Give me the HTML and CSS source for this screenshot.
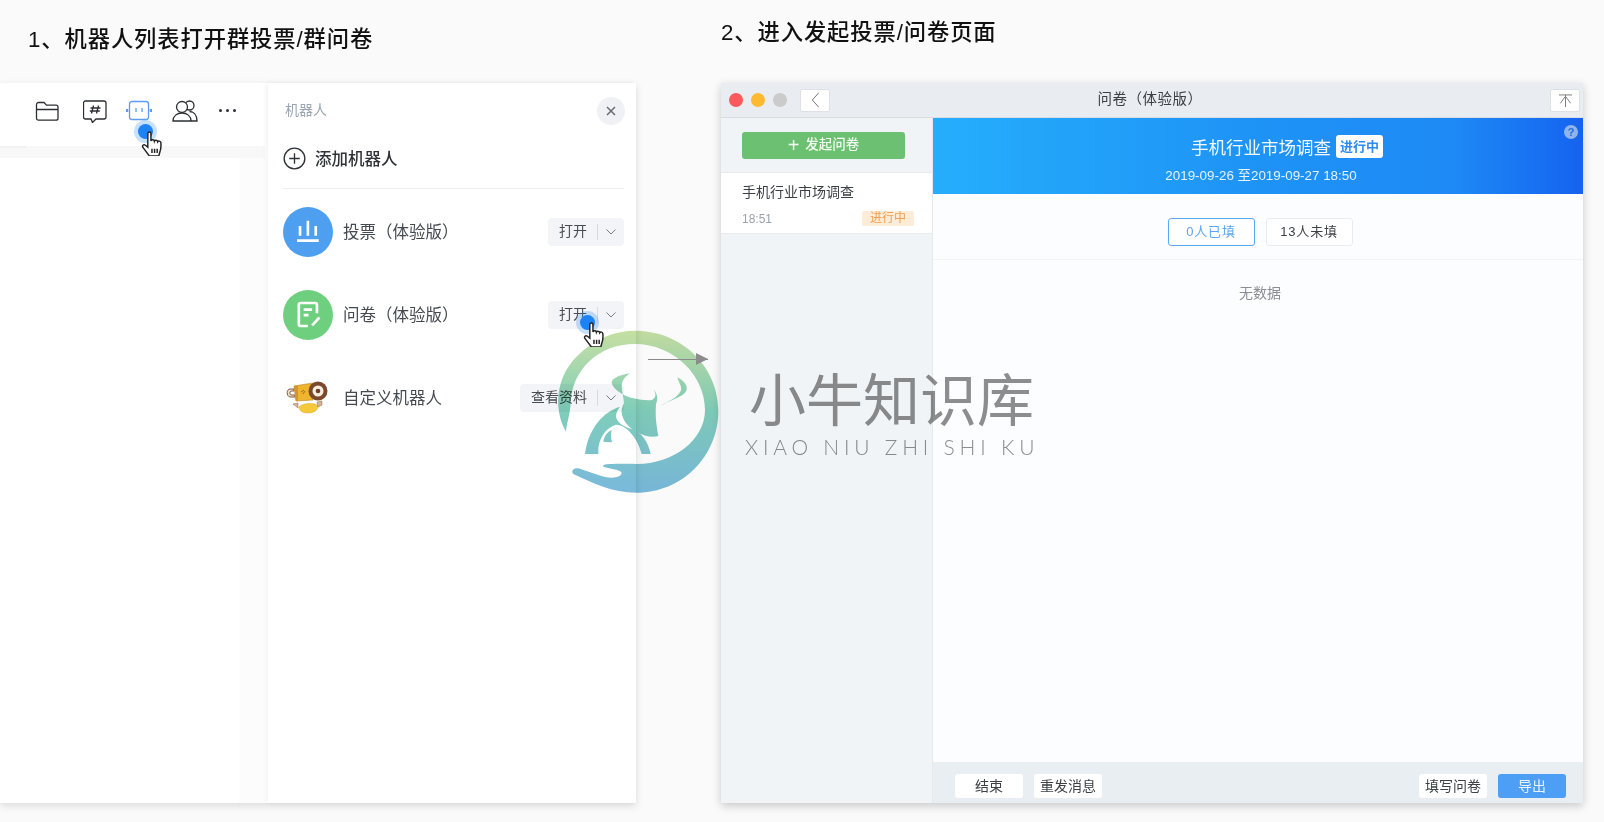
FILE: index.html
```html
<!DOCTYPE html>
<html lang="zh">
<head>
<meta charset="utf-8">
<title>投票问卷</title>
<link rel="stylesheet" href="styles.css">
</head>
<body>
<div class="page">
  <section class="col col-left">
    <h2 class="step step-left">1、机器人列表打开群投票/群问卷</h2>
    <div class="panel">
      <div class="chat">
        <div class="toolbar">
          <svg class="tool" viewBox="0 0 24 24"><path d="M1.500 5.500a2 2 0 0 1 2-2h5.500l2.500 2.700h9.500a2 2 0 0 1 2 2v11a2 2 0 0 1-2 2h-17.500a2 2 0 0 1-2-2zM1.500 10.500h21"/></svg>
          <svg class="tool tool-chat" viewBox="0 0 24 24"><path d="M3 2h18a2 2 0 0 1 2 2v14a2 2 0 0 1-2 2h-8l-3.500 3.500-1.500-3.500h-5.500a2 2 0 0 1-2-2v-14a2 2 0 0 1 2-2zM10.500 6.500l-2 8M15.500 6.500l-2 8M7.500 9h10M6.800 12h10"/></svg>
          <svg class="tool tool-blue" viewBox="0 0 26 24"><rect x="3.500" y="2.500" width="19" height="18" rx="2.500"/><path d="M10 9v4M16 9v4"/><path class="thick" d="M1 10v3M25 10v3"/></svg>
          <svg class="tool tool-wide" viewBox="0 0 26 24"><circle cx="17.500" cy="6.500" r="4.500"/><circle cx="10" cy="8" r="5.500" fill="#fff"/><path d="M1 22c0-5 4-8 9-8s9 3 9 8zM17.500 12.500c4 0 7.500 3 7.500 9.500h-6"/></svg>
          <span class="dots"><i></i><i></i><i></i></span>
        </div>
        <div class="strip"></div>
        <div class="chat-body"><div class="chat-sheet"></div></div>
      </div>
      <aside class="robots">
        <header class="robots-head">
          <span class="robots-title">机器人</span>
          <span class="close">
            <svg viewBox="0 0 10 10"><path d="M1 1l8 8M9 1l-8 8"/></svg>
          </span>
        </header>
        <div class="add">
          <svg class="add-icon" viewBox="0 0 24 24"><circle cx="12" cy="12" r="10.800"/><path d="M12 6.500v11M6.500 12h11"/></svg>
          <span>添加机器人</span>
        </div>
        <ul class="robot-list">
          <li class="robot">
            <span class="avatar avatar-blue">
              <svg viewBox="0 0 24 24"><path d="M5 7.500v8M11.500 3v12.500M18 7.500v8M2.500 19.500h18"/></svg>
            </span>
            <span class="robot-name">投票（体验版）</span>
            <span class="split"><b>打开</b><em></em><svg viewBox="0 0 10 6"><path d="M.5.500l4.500 4.500 4.500-4.500"/></svg></span>
          </li>
          <li class="robot">
            <span class="avatar avatar-green">
              <svg viewBox="0 0 24 24"><path d="M19 11v-7a1.500 1.500 0 0 0-1.500-1.500h-12a1.500 1.500 0 0 0-1.500 1.500v16a1.500 1.500 0 0 0 1.500 1.500h6M8 8h7M8 12.500h4M15 21l6-6.500"/></svg>
            </span>
            <span class="robot-name">问卷（体验版）</span>
            <span class="split"><b>打开</b><em></em><svg viewBox="0 0 10 6"><path d="M.5.500l4.500 4.500 4.500-4.500"/></svg></span>
          </li>
          <li class="robot">
            <svg class="avatar-art" viewBox="0 0 44 34">
              <path d="M8 8H4c-3.500 0-4 7 0 8h5v-2H5c-1.500 0-1.500-4 0-4h3z" fill="#efe2d2" stroke="#7a4a2c" stroke-width=".9"/>
              <path d="M8 5l19-3v17l-17 1z" fill="#efb52e" stroke="#b97f20" stroke-width=".6"/>
              <path d="M8 5l4-.6V19.800l-2 .2z" fill="#d4952a"/>
              <path d="M15 11l3-2M17 13l2-3" stroke="#8a5a20" stroke-width=".8" fill="none"/>
              <circle cx="32" cy="10" r="9.500" fill="#7a4a2c"/>
              <circle cx="32" cy="10" r="5.500" fill="#f6ecdf"/>
              <circle cx="32" cy="10" r="2.300" fill="#6e3f26"/>
              <path d="M13 26c3-4 16-5 19-1 0 4-4 7-9.500 7S13 30 13 26z" fill="#f4c93a" stroke="#d9a52a" stroke-width=".5"/>
              <path d="M12 22l-5 1 5 4zM31 21l5-1v4l-4 2z" fill="#d3b59a" stroke="#8a6a50" stroke-width=".5"/>
            </svg>
            <span class="robot-name">自定义机器人</span>
            <span class="split"><b>查看资料</b><em></em><svg viewBox="0 0 10 6"><path d="M.5.500l4.500 4.500 4.500-4.500"/></svg></span>
          </li>
        </ul>
      </aside>
    </div>
  </section>

  <section class="col col-right">
    <h2 class="step step-right">2、进入发起投票/问卷页面</h2>
    <div class="window">
      <div class="titlebar">
        <span class="lights"><i class="red"></i><i class="amber"></i><i class="grey"></i></span>
        <span class="bar-btn bar-back">
          <svg viewBox="0 0 10 18"><path d="M8.500 1l-7 8 7 8"/></svg>
        </span>
        <span class="win-title">问卷（体验版）</span>
        <span class="bar-btn bar-pin">
          <svg viewBox="0 0 16 14"><path d="M1 1h14M8 1v13M7.500 3l-5 7M8.500 3l5 7"/></svg>
        </span>
      </div>
      <div class="win-body">
        <nav class="side">
          <div class="side-top"><button class="new-btn"><span class="plus">+</span>发起问卷</button></div>
          <div class="item">
            <div class="item-title">手机行业市场调查</div>
            <div class="item-meta"><span class="item-time">18:51</span><span class="item-tag">进行中</span></div>
          </div>
        </nav>
        <main class="content">
          <div class="hero">
            <div class="hero-line"><span class="hero-title">手机行业市场调查</span><span class="hero-tag">进行中</span></div>
            <div class="hero-date">2019-09-26 至2019-09-27 18:50</div>
            <span class="help">?</span>
          </div>
          <div class="tabs">
            <span class="tab tab-on">0人已填</span>
            <span class="tab">13人未填</span>
          </div>
          <div class="empty">无数据</div>
          <footer class="foot">
            <span class="fbtn">结束</span>
            <span class="fbtn">重发消息</span>
            <span class="foot-gap"></span>
            <span class="fbtn">填写问卷</span>
            <span class="fbtn fbtn-main">导出</span>
          </footer>
        </main>
      </div>
    </div>
  </section>
</div>

<svg class="logo" viewBox="0 0 570 570">
  <defs>
    <linearGradient id="lg" gradientUnits="userSpaceOnUse" x1="0" y1="32" x2="0" y2="518">
      <stop offset="0" stop-color="#c6e0a2"/>
      <stop offset=".5" stop-color="#7fcdba"/>
      <stop offset="1" stop-color="#79b9dc"/>
    </linearGradient>
  </defs>
  <path class="logo-fill" d="M78 335C40 270 45 170 115 105C165 55 225 32 285 32C425 32 535 140 535 272C535 410 425 518 290 518C215 518 160 490 100 462C92 452 100 443 115 445L175 465C200 475 240 478 245 460C245 450 220 448 190 440C185 433 200 430 290 432C400 432 495 360 495 270C495 165 400 72 285 72C175 72 95 150 92 250C90 285 80 310 78 335Z"/>
  <path class="logo-fill" d="M270 160C235 165 212 178 215 190C222 212 255 230 280 235C300 240 325 242 335 240C348 236 350 222 340 208C354 222 354 240 348 252C345 290 350 320 355 348C335 354 312 348 290 335C270 325 255 310 248 290C242 275 245 262 252 250C252 235 245 215 245 195C248 178 258 168 270 160Z"/>
  <path class="logo-fill" d="M240 260C190 275 145 325 135 402L175 402C172 360 195 325 225 315C250 310 290 345 305 402L332 402C325 365 305 340 280 328C250 322 230 305 228 290C228 280 232 270 240 260Z"/>
  <path class="logo-fill" d="M190 365C192 348 203 335 215 330C212 342 213 355 216 367Z"/>
  <path class="logo-fill" d="M362 258C395 235 445 230 440 200C435 185 422 178 412 172C416 190 432 205 418 220C405 238 380 245 362 258Z"/>
</svg>

<div class="brand">
  <div class="brand-cn">小牛知识库</div>
  <div class="brand-en">XIAO NIU ZHI SHI KU</div>
</div>

<div class="arrow"><span></span></div>

<span class="touch touch-a"><i></i>
  <svg class="hand" viewBox="1 0 19 24"><path d="M6 2.500c0-2 3-2 3 0v7c.5-1.500 3-1.500 3.300.3.500-1.400 3-1.300 3.200.5.700-1 2.800-.8 3 .9.300 3 .3 6-1 9.300l-1 3.500h-9l-6-8c-1.500-2 .5-3.500 2.200-2.300l2.300 1.800z"/><path d="M10 17v4M12.500 17v4M15 17v4"/></svg>
</span>
<span class="touch touch-b"><i></i>
  <svg class="hand" viewBox="1 0 19 24"><path d="M6 2.500c0-2 3-2 3 0v7c.5-1.500 3-1.500 3.300.3.500-1.400 3-1.300 3.200.5.700-1 2.800-.8 3 .9.300 3 .3 6-1 9.300l-1 3.500h-9l-6-8c-1.500-2 .5-3.500 2.200-2.300l2.300 1.800z"/><path d="M10 17v4M12.500 17v4M15 17v4"/></svg>
</span>
</body>
</html>
```
FILE: styles.css
```css
* { box-sizing: border-box; }
html, body { margin: 0; padding: 0; }
body {
  position: relative;
  width: 1604px;
  height: 822px;
  overflow: hidden;
  background: #fafafa;
  color: #33383e;
  font-family: "Liberation Sans", "Noto Sans CJK SC", sans-serif;
}
.page { display: grid; grid-template-columns: 636px 1fr; height: 822px; }
.col { display: flex; flex-direction: column; height: 100%; }
.col-right { padding: 0 21px 19px 85px; }
.step { margin: 0; font-weight: 500; color: #111; font-size: 22.300px; letter-spacing: .9px; white-space: nowrap; }
.step-left { height: 83px; padding: 25px 0 0 28px; line-height: 30px; }
.step-right { height: 83px; padding: 18px 0 0 0; line-height: 30px; }

/* Left panel */
.panel { display: flex; height: 720px; background: #fff; box-shadow: 0 3px 8px rgba(0,0,0,.12); margin-bottom: 19px; }
.chat { width: 265px; display: flex; flex-direction: column; background: #fff; }
.toolbar { height: 63px; display: flex; align-items: center; padding: 0 0 8px 35px; }
.tool { width: 24px; height: 24px; fill: none; stroke: #2b2f33; stroke-width: 1.300; flex: none; }
.tool-chat { margin-left: 24px; }
.tool-blue { width: 26px; stroke: #5b9df5; margin-left: 19px; }
.tool-blue .thick { stroke-width: 2.500; }
.tool-wide { width: 26px; margin-left: 20px; }
.dots { display: flex; gap: 4px; width: 19px; margin-left: 21px; }
.dots i { width: 3px; height: 3px; border-radius: 50%; background: #2b2f33; }
.strip { height: 12px; background: linear-gradient(#f1f1f1 0, #f1f1f1 2px, transparent 2px) 0 0 / 26px 100% no-repeat, #f8f8f8; }
.chat-body { flex: 1; background: #fcfcfc; }
.chat-sheet { width: 239px; height: 100%; background: #fff; }
.robots { width: 368px; margin-left: 3px; background: #fff; box-shadow: -2px 0 5px rgba(0,0,0,.05); padding: 0 12px 0 15px; }
.robots-head { height: 55px; display: flex; align-items: center; justify-content: space-between; padding: 0 0 0 2px; }
.robots-title { font-size: 14px; color: #9aa5b1; line-height: 20px; padding-bottom: 2px; }
.close { width: 28px; height: 28px; border-radius: 50%; background: #f0f1f5; display: flex; align-items: center; justify-content: center; margin: 0 -1px 0 0; }
.close svg { width: 10px; height: 10px; fill: none; stroke: #666b71; stroke-width: 1.500; }
.add { height: 51px; display: flex; align-items: center; gap: 9px; border-bottom: 1px solid #eef0f2; font-size: 16.500px; font-weight: 500; color: #2f3338; padding-bottom: 10px; }
.add-icon { width: 23px; height: 23px; fill: none; stroke: #2f3338; stroke-width: 1.400; }
.robot-list { list-style: none; margin: 0; padding: 0; }
.robot { height: 83px; display: flex; align-items: center; }
.robot:first-child { margin-top: 1px; }
.avatar { width: 50px; height: 50px; border-radius: 50%; display: flex; align-items: center; justify-content: center; flex: none; }
.avatar svg { width: 29px; height: 29px; fill: none; stroke: #fff; stroke-width: 2.200; }
.avatar-blue { background: #4e9ff0; }
.avatar-green { background: #6ed07e; }
.avatar-art { width: 44px; height: 34px; flex: none; margin: 0 3px; }
.robot-name { font-size: 16.500px; color: #454a50; margin-left: 10px; flex: 1; white-space: nowrap; line-height: 24px; padding-top: 1px; }
.split { height: 28px; background: #f2f4f7; border-radius: 4px; display: flex; align-items: center; padding: 0 8px 0 11px; font-size: 14px; color: #474c52; }
.split b { font-weight: 400; line-height: 20px; padding-bottom: 2px; }
.split em { width: 1px; height: 16px; background: #d7dade; margin: 0 8px 0 10px; }
.split svg { width: 10px; height: 6px; fill: none; stroke: #777c82; stroke-width: 1; }

/* Right window */
.window { height: 720px; display: flex; flex-direction: column; background: #fff; box-shadow: 0 3px 9px rgba(0,0,0,.2); }
.titlebar { height: 35px; background: #e9edf1; border-bottom: 1px solid #d9dde2; display: flex; align-items: center; padding: 0 3px 0 8px; flex: none; }
.lights { display: flex; gap: 8px; }
.lights i { width: 14px; height: 14px; border-radius: 50%; }
.red { background: #fb5a5c; }
.amber { background: #fdb92f; }
.grey { background: #cbcbcb; }
.bar-btn { width: 30px; height: 23px; background: #fff; border: 1px solid #dde0e4; border-radius: 2px; display: flex; align-items: center; justify-content: center; }
.bar-back { margin-left: 13px; }
.bar-back svg { width: 9px; height: 16px; fill: none; stroke: #666; stroke-width: 1; }
.bar-pin svg { width: 15px; height: 13px; fill: none; stroke: #777; stroke-width: 1; }
.win-title { flex: 1; text-align: center; font-size: 14.500px; letter-spacing: .5px; color: #3c3f44; padding: 0 80px 3px 0; line-height: 20px; }
.win-body { flex: 1; display: flex; min-height: 0; }
.side { width: 212px; flex: none; background: #f0f4f7; border-right: 1px solid #e6e8ea; }
.side-top { height: 55px; padding: 14px 27px 0 21px; border-bottom: 1px solid #e9ecef; }
.new-btn { width: 163px; height: 27px; border: none; border-radius: 3px; background: #6cc071; color: #f2faf2; font: inherit; font-size: 13.500px; font-weight: 500; line-height: 25px; padding: 0 0 2px; display: flex; align-items: center; justify-content: center; gap: 6px; }
.plus { font-size: 20px; line-height: 20px; font-weight: 400; }
.item { height: 61px; background: #fff; border-bottom: 1px solid #e9ecef; padding: 9px 18px 0 21px; }
.item-title { font-size: 14px; line-height: 20px; color: #3c4046; }
.item-meta { display: flex; justify-content: space-between; align-items: center; margin-top: 9px; }
.item-time { font-size: 12px; color: #9aa1a9; }
.item-tag { width: 52px; height: 15px; line-height: 15px; text-align: center; background: #fdecd8; color: #f0a050; font-size: 12px; border-radius: 2px; }
.content { flex: 1; display: flex; flex-direction: column; background: #fcfdff; min-width: 0; }
.hero { position: relative; height: 76px; background: linear-gradient(90deg, #25aefc 0, #1e93f6 50%, #1e8af5 80%, #1463ef 100%); color: #fff; display: flex; flex-direction: column; align-items: center; flex: none; padding-top: 16px; }
.hero-line { display: flex; align-items: center; gap: 5px; height: 24px; margin-left: 58px; }
.hero-title { font-size: 17.500px; color: #f2f8ff; }
.hero-tag { width: 47px; height: 23px; line-height: 23px; text-align: center; background: #fff; color: #2e8bf0; font-size: 13px; font-weight: 700; border-radius: 3px; }
.hero-date { font-size: 13.400px; margin-top: 6px; margin-left: 6px; color: #e6f2ff; }
.help { position: absolute; top: 7px; right: 5px; width: 14px; height: 14px; line-height: 14px; border-radius: 50%; background: #92b4ea; color: #1e6fe0; font-size: 11px; font-weight: 700; text-align: center; }
.tabs { height: 66px; flex: none; display: flex; justify-content: center; align-items: flex-start; gap: 11px; padding: 24px 0 0 4px; border-bottom: 1px solid #f3f4f6; }
.tab { width: 87px; height: 28px; line-height: 25px; text-align: center; font-size: 13px; border: 1px solid #e9ebee; border-radius: 3px; background: #fff; color: #3d4046; letter-spacing: .8px; }
.tab-on { border-color: #5aa9f5; color: #5aa5f2; }
.empty { flex: 1; text-align: center; font-size: 14px; color: #8a8e93; padding: 23px 0 0 4px; line-height: 20px; }
.foot { height: 41px; flex: none; background: #e9eef2; display: flex; align-items: flex-start; gap: 11px; padding: 12px 17px 0 22px; }
.foot-gap { flex: 1; }
.fbtn { width: 68px; height: 24px; line-height: 24px; text-align: center; font-size: 14px; background: #fff; border-radius: 3px; color: #3e4247; white-space: nowrap; }
.fbtn-main { background: #4d9ff6; color: #e9f3ff; }

/* Overlays */
.touch { position: absolute; width: 23px; height: 23px; border-radius: 50%; background: rgba(31,130,246,.25); }
.touch i { position: absolute; left: 4px; top: 4px; width: 15px; height: 15px; border-radius: 50%; background: #1d82f6; }
.touch-a { left: 134px; top: 120px; }
.touch-b { left: 576px; top: 311px; }
.hand { position: absolute; left: 7px; top: 11px; width: 23px; height: 25px; fill: #fff; stroke: #222; stroke-width: 1.400; }
.logo { position: absolute; left: 540px; top: 320px; width: 190px; height: 190px; mix-blend-mode: multiply; }
.logo-fill { fill: url(#lg); }
.brand { position: absolute; left: 749px; top: 358px; color: #8e8e8e; mix-blend-mode: multiply; }
.brand-cn { font-family: "Noto Sans CJK SC", sans-serif; font-weight: 400; font-size: 57px; line-height: 76px; white-space: nowrap; }
.brand-en { font-family: "Lato", sans-serif; font-weight: 300; font-size: 21px; line-height: 24px; letter-spacing: 4.800px; margin: 1px 0 0 -4px; color: #8f8f8f; white-space: nowrap; }
.arrow { position: absolute; left: 648px; top: 359px; width: 60px; height: 1px; background: #8a8a8a; }
.arrow span { position: absolute; right: 0; top: -6px; border-left: 12px solid #8c8c8c; border-top: 6px solid transparent; border-bottom: 6px solid transparent; }
```
